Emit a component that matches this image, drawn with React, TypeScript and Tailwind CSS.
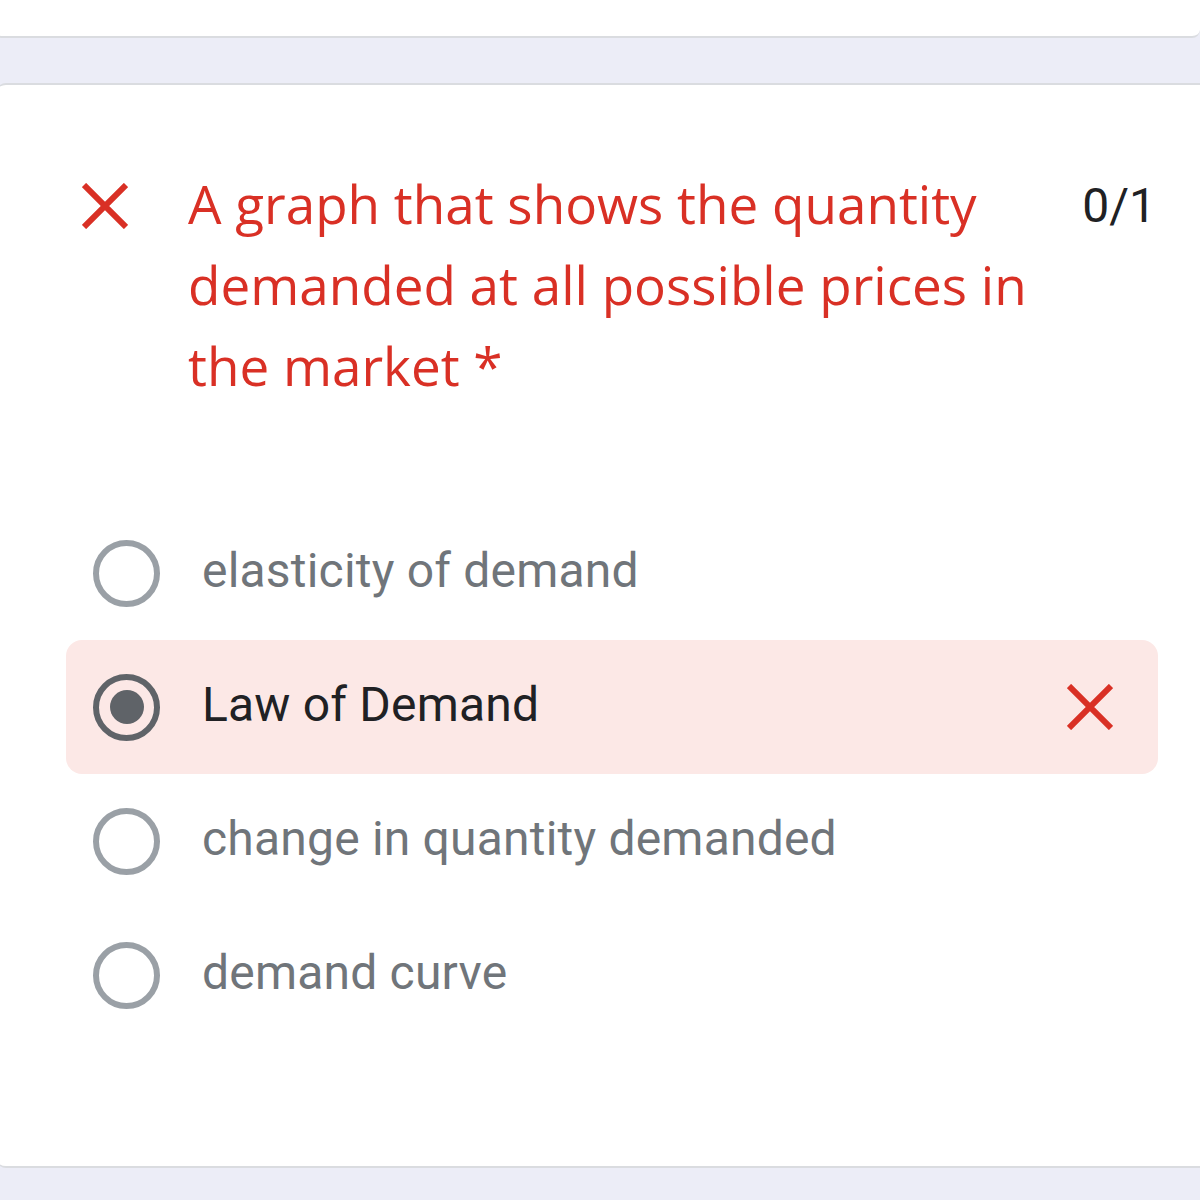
import { useState } from "react";

const options = [
  "elasticity of demand",
  "Law of Demand",
  "change in quantity demanded",
  "demand curve",
];

function CrossIcon({ className }: { className?: string }) {
  return (
    <svg viewBox="0 0 46 46" className={className} fill="none" stroke="currentColor" strokeWidth={6}>
      <path d="M2 2L44 44M44 2L2 44" />
    </svg>
  );
}

function Radio({ checked }: { checked: boolean }) {
  return (
    <div
      className={
        checked
          ? "w-[67px] h-[67px] rounded-full border-[6px] border-[#5f6368] flex items-center justify-center shrink-0"
          : "w-[67px] h-[67px] rounded-full border-[6px] border-[#9aa0a6] shrink-0"
      }
    >
      {checked && <div className="w-[34px] h-[34px] rounded-full bg-[#5f6368]" />}
    </div>
  );
}

export default function App() {
  const [selected] = useState(1);

  return (
    <div className="w-[1200px] h-[1200px] overflow-hidden bg-[#ecedf7]">
      <div className="-ml-[6px] -mt-[20px] h-[58px] rounded-lg bg-white border-b-2 border-[#dadce0]" />

      <div className="mt-[45px] -ml-[4px] w-[1220px] h-[1085px] rounded-[10px] bg-white border-t-2 border-b-2 border-[#dadce0]">
        <div className="flex items-start pt-[78px] pl-[86px] pr-[60px]">
          <CrossIcon className="w-[46px] h-[46px] mt-[20px] text-[#d93025] shrink-0" />
          <div
            className="ml-[60px] w-[860px] text-[#d93025] text-[53px] leading-[81px]"
            style={{ fontFamily: "'Open Sans', sans-serif" }}
          >
            A graph that shows the quantity demanded at all possible prices in the market *
          </div>
          <div
            className="ml-auto mt-[15px] text-[#202124] text-[48px] leading-[56px]"
            style={{ fontFamily: "Roboto, sans-serif" }}
          >
            0/1
          </div>
        </div>

        <div className="mt-[100px] pl-[70px] w-[1162px] flex flex-col">
          {options.map((opt, i) => {
            const isSel = i === selected;
            return (
              <div
                key={opt}
                className={
                  isSel
                    ? "h-[134px] flex items-center pl-[27px] pr-[45px] rounded-2xl bg-[#fce8e6]"
                    : "h-[134px] flex items-center pl-[27px] pr-[45px]"
                }
              >
                <Radio checked={isSel} />
                <span
                  className={
                    isSel
                      ? "ml-[42px] -mt-[4px] text-[48px] tracking-[0.2px] text-[#202124]"
                      : "ml-[42px] -mt-[4px] text-[48px] tracking-[0.2px] text-[#70757a]"
                  }
                  style={{ fontFamily: "Roboto, sans-serif" }}
                >
                  {opt}
                </span>
                {isSel && <CrossIcon className="ml-auto w-[46px] h-[46px] text-[#d93025]" />}
              </div>
            );
          })}
        </div>
      </div>
    </div>
  );
}
